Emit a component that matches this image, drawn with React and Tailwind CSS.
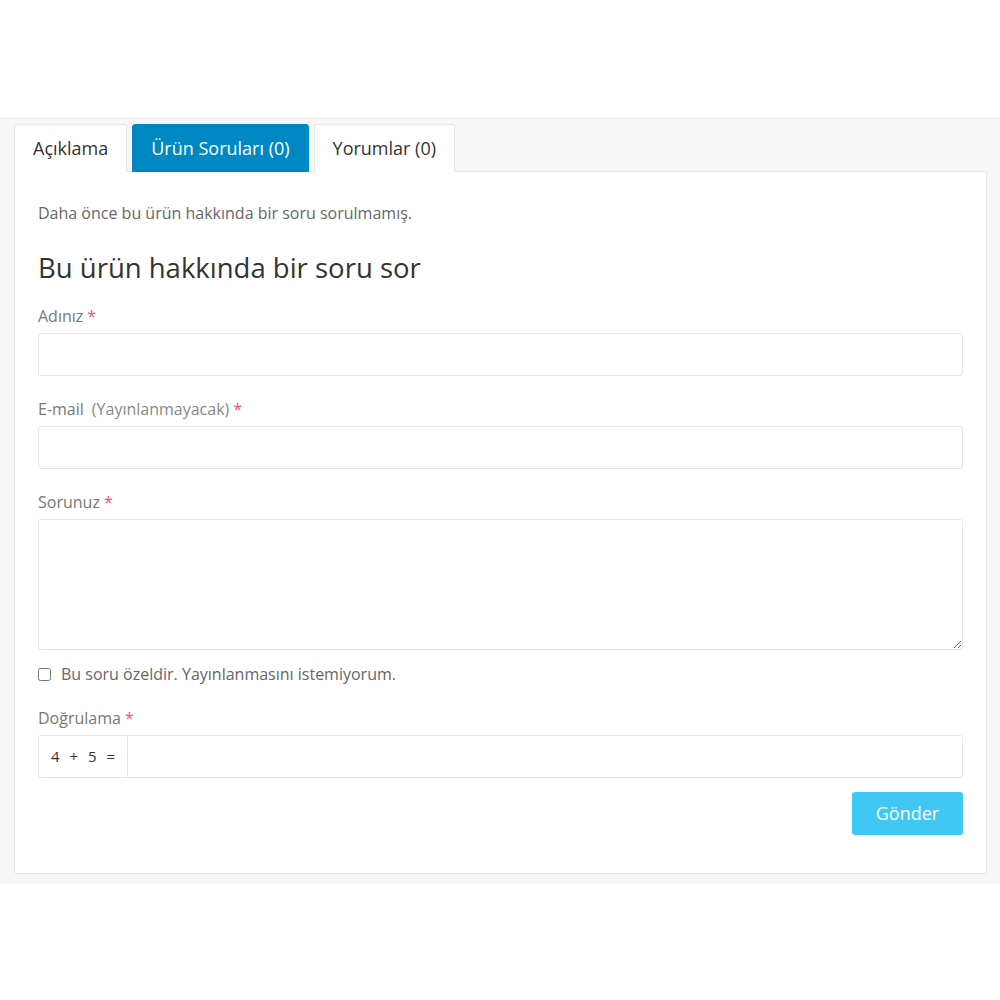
import { useState } from "react";

const Label = ({ children, note }) => (
  <label className="block text-[16px] text-[#777] mb-[6px] leading-[22px]">
    {children}
    {note && <span className="ml-2 text-[#888]">{note}</span>}
    <span className="ml-1 text-[#f0507a]">*</span>
  </label>
);

const inputCls =
  "block w-full h-[43px] border border-[#e5e5e5] rounded-[3px] bg-white px-3 text-[16px] outline-none";

export default function App() {
  const [tab, setTab] = useState(1);
  const tabs = ["Açıklama", "Ürün Soruları (0)", "Yorumlar (0)"];

  return (
    <div className="bg-white min-h-[1000px] pt-[118px] font-['Open_Sans',sans-serif]">
      <div className="bg-[#f7f7f7] border-t border-[#ebebeb] pl-[14px] pr-[13px] pt-[5px] pb-[10px]">
        <div className="flex gap-[5px] -mb-px relative z-10">
          {tabs.map((t, i) => (
            <button
              key={t}
              onClick={() => setTab(i)}
              className={`h-[48px] px-[18px] text-[18px] rounded-t-[3px] border ${
                tab === i
                  ? "bg-[#0088c2] border-[#0088c2] text-white"
                  : "bg-white border-[#e5e5e5] border-b-white text-[#333]"
              }`}
            >
              {t}
            </button>
          ))}
        </div>
        <div className="bg-white border border-[#e5e5e5] rounded-b-[3px] px-[23px] pt-[30px] pb-[38px]">
          <p className="text-[16px] text-[#666] leading-[22px]">
            Daha önce bu ürün hakkında bir soru sorulmamış.
          </p>
          <h3 className="text-[27.5px] text-[#333] mt-[26px] mb-[19px] leading-[36px]">
            Bu ürün hakkında bir soru sor
          </h3>

          <Label>Adınız</Label>
          <input className={inputCls} />

          <div className="mt-[22px]">
            <Label note="(Yayınlanmayacak)">E-mail</Label>
            <input className={inputCls} />
          </div>

          <div className="mt-[22px]">
            <Label>Sorunuz</Label>
            <textarea className="block w-full h-[131px] border border-[#e5e5e5] rounded-[3px] px-3 py-2 text-[16px] outline-none" />
          </div>

          <label className="flex items-center gap-[10px] mt-[13px] text-[16px] text-[#666] leading-[22px]">
            <input type="checkbox" className="w-[13px] h-[13px]" />
            Bu soru özeldir. Yayınlanmasını istemiyorum.
          </label>

          <div className="mt-[22px]">
            <Label>Doğrulama</Label>
            <div className="flex h-[43px] border border-[#e5e5e5] rounded-[3px]">
              <div className="w-[89px] flex items-center pl-[12px] border-r border-[#e5e5e5] text-[15px] text-[#333] tracking-[3px] whitespace-pre">
                4 + 5 =
              </div>
              <input className="flex-1 px-3 text-[16px] outline-none" />
            </div>
          </div>

          <div className="flex justify-end mt-[14px]">
            <button className="w-[111px] h-[43px] bg-[#40c8f4] text-white text-[18px] rounded-[3px]">
              Gönder
            </button>
          </div>
        </div>
      </div>
    </div>
  );
}
